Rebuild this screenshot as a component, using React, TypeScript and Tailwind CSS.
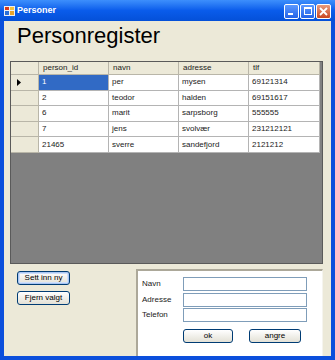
const rows = [
  { id: "1", navn: "per", adresse: "mysen", tlf: "69121314" },
  { id: "2", navn: "teodor", adresse: "halden", tlf: "69151617" },
  { id: "6", navn: "marit", adresse: "sarpsborg", tlf: "555555" },
  { id: "7", navn: "jens", adresse: "svolvær", tlf: "231212121" },
  { id: "21465", navn: "sverre", adresse: "sandefjord", tlf: "2121212" },
];

function XpButton({ label, w, focused }: { label: string; w: string; focused?: boolean }) {
  return (
    <button
      className={`${w} h-[14px] rounded-[3px] border border-[#003c74] bg-linear-to-b from-[#ffffff] to-[#e3e1d6] text-[8px] leading-none text-black ${
        focused ? "shadow-[inset_0_0_0_1px_#a9c6f3,inset_0_0_0_2px_#d0e0fa]" : ""
      }`}
    >
      {label}
    </button>
  );
}

function TitleButton({ kind }: { kind: "min" | "max" | "close" }) {
  const bg =
    kind === "close"
      ? "bg-linear-to-b from-[#e89a7c] to-[#c8461f]"
      : "bg-linear-to-b from-[#5b98ff] to-[#2563e8]";
  return (
    <div className={`w-[15px] h-[15px] rounded-[2px] border border-white flex items-center justify-center ${bg}`}>
      {kind === "min" && <div className="w-[5px] h-[2px] bg-white mt-[6px] -ml-[3px]" />}
      {kind === "max" && <div className="w-[8px] h-[8px] border border-white border-t-2" />}
      {kind === "close" && (
        <svg width="9" height="9" viewBox="0 0 9 9">
          <path d="M1 1 L8 8 M8 1 L1 8" stroke="white" strokeWidth="1.8" />
        </svg>
      )}
    </div>
  );
}

export default function App() {
  return (
    <div
      className="w-[335px] h-[360px] flex flex-col bg-[#0b4fdc] overflow-hidden"
      style={{ fontFamily: '"Liberation Sans", Arial, sans-serif' }}
    >
      {/* title bar */}
      <div className="h-[21px] flex items-center pl-[4px] pr-[4px] bg-linear-to-b from-[#3d8ffc] via-[#0a5ceb] to-[#0450d8]">
        <svg width="11" height="10" viewBox="0 0 11 10" className="mt-[1px]">
          <rect x="0" y="0" width="11" height="10" fill="#f0f0f0" />
          <rect x="1" y="1" width="4" height="3" fill="#d83a1c" />
          <rect x="6" y="1" width="4" height="3" fill="#f6c23c" />
          <rect x="1" y="5" width="4" height="4" fill="#2a6fd8" />
          <rect x="6" y="5" width="4" height="4" fill="#e9a42c" />
        </svg>
        <span className="ml-[2px] text-[9px] font-bold text-white mt-[1px]">Personer</span>
        <div className="ml-auto flex gap-[1px] mt-[1px]">
          <TitleButton kind="min" />
          <TitleButton kind="max" />
          <TitleButton kind="close" />
        </div>
      </div>

      {/* client area */}
      <div className="flex-1 mx-[4px] mb-[4px] bg-[#ece9d8] flex flex-col">
        <h1 className="ml-[13px] mt-[1px] text-[22px] leading-[28px] text-black">Personregister</h1>

        {/* data grid */}
        <div className="ml-[6px] mt-[11px] w-[313px] h-[203px] border border-[#5a5a5a] bg-[#808080] text-[8px] text-[#222]">
          <div className="flex h-[13px] w-[309px] bg-[#ece9d8]">
            <div className="w-[28px] border-r border-b border-[#b9b6a8]" />
            {["person_id", "navn", "adresse", "tlf"].map((h, i) => (
              <div
                key={h}
                className={`${i === 3 ? "w-[71px]" : "w-[70px]"} border-r border-b border-[#b9b6a8] pl-[4px] flex items-center`}
              >
                {h}
              </div>
            ))}
          </div>
          {rows.map((r, ri) => (
            <div key={r.id} className="flex h-[15.6px] w-[309px]">
              <div className="w-[28px] bg-[#ece9d8] border-r border-b border-[#b9b6a8] flex items-center pl-[6px]">
                {ri === 0 && (
                  <svg width="4" height="7" viewBox="0 0 4 7">
                    <path d="M0 0 L4 3.5 L0 7 Z" fill="black" />
                  </svg>
                )}
              </div>
              {[r.id, r.navn, r.adresse, r.tlf].map((v, ci) => (
                <div
                  key={ci}
                  className={`${ci === 3 ? "w-[71px]" : "w-[70px]"} border-r border-b border-[#b4b4b4] pl-[3px] flex items-center ${
                    ri === 0 && ci === 0 ? "bg-[#316ac5] text-white" : "bg-white"
                  }`}
                >
                  {v}
                </div>
              ))}
            </div>
          ))}
        </div>

        {/* bottom part */}
        <div className="flex flex-1">
          <div className="w-[132px] pl-[13px] pt-[7px] flex flex-col gap-[6px]">
            <XpButton label="Sett inn ny" w="w-[53px]" focused />
            <XpButton label="Fjern valgt" w="w-[53px]" />
          </div>
          <div className="mt-[5px] mr-[8px] flex-1 border-t-2 border-l-2 border-r border-t-[#aca899] border-l-[#aca899] border-r-[#f5f4ee] bg-white text-[8px] text-[#222]">
            <div className="pl-[4px] pt-[6px] flex flex-col gap-[1.5px]">
              {["Navn", "Adresse", "Telefon"].map((l) => (
                <div key={l} className="flex items-center">
                  <span className="w-[41px]">{l}</span>
                  <div className="w-[124px] h-[14px] border border-[#7f9db9] bg-white" />
                </div>
              ))}
            </div>
            <div className="flex mt-[7px] ml-[45px] gap-[16px]">
              <XpButton label="ok" w="w-[50px]" />
              <XpButton label="angre" w="w-[52px]" />
            </div>
          </div>
        </div>
      </div>
    </div>
  );
}
